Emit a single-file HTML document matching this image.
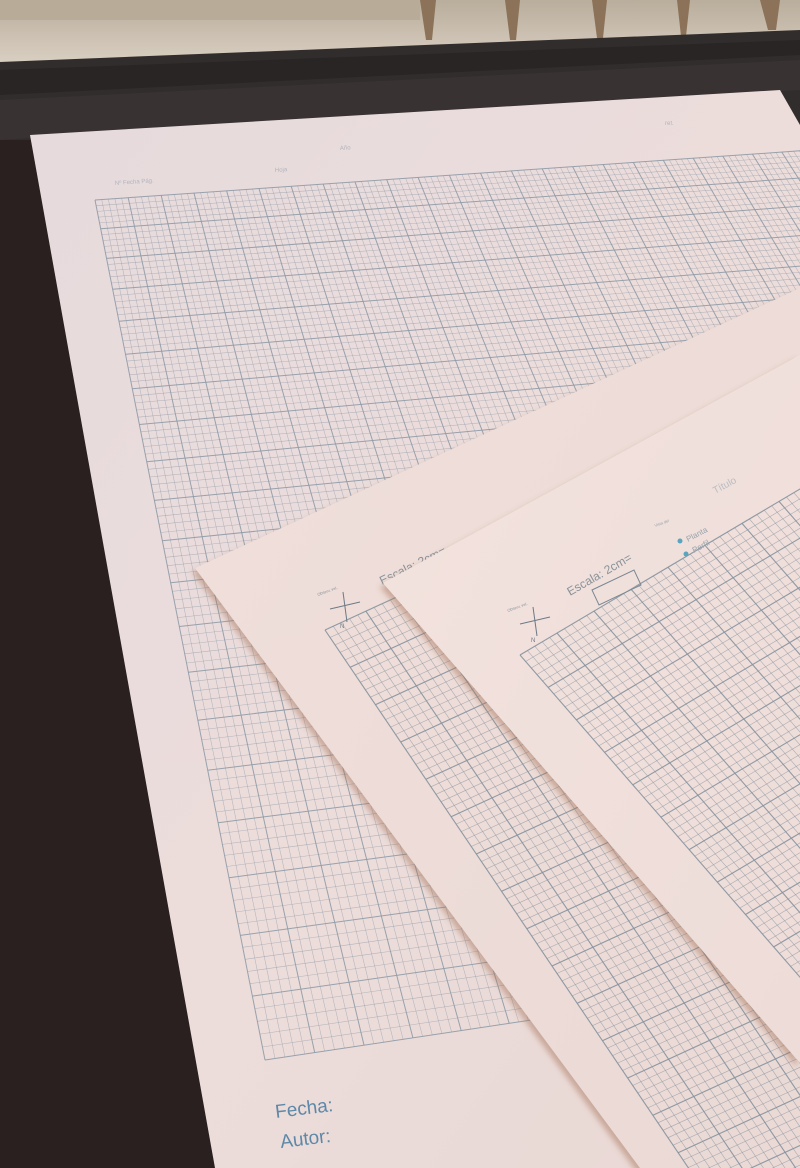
<!DOCTYPE html>
<html><head><meta charset="utf-8">
<style>
html,body{margin:0;padding:0;width:800px;height:1168px;overflow:hidden;background:#2a201f}
svg{display:block;overflow:hidden}
text{font-family:"Liberation Sans","DejaVu Sans",sans-serif}
</style></head>
<body>
<svg id="s" width="800" height="1168" viewBox="0 0 800 1168" xmlns="http://www.w3.org/2000/svg">
<defs>
<linearGradient id="pg" x1="0" y1="0" x2="1" y2="1">
<stop offset="0" stop-color="#e6dadd"/><stop offset="0.5" stop-color="#ecdddb"/><stop offset="1" stop-color="#e9d8d4"/>
</linearGradient>
<linearGradient id="p2" x1="0" y1="0" x2="1" y2="1">
<stop offset="0" stop-color="#f0dfda"/><stop offset="1" stop-color="#ead9d5"/>
</linearGradient>
<linearGradient id="p3" x1="0" y1="0" x2="1" y2="1">
<stop offset="0" stop-color="#f3e3de"/><stop offset="1" stop-color="#eddcd8"/>
</linearGradient>
<linearGradient id="kb" x1="0" y1="0" x2="0" y2="1">
<stop offset="0" stop-color="#b9ad9c"/><stop offset="1" stop-color="#ddd3c6"/>
</linearGradient>
<clipPath id="c0"><rect x="0" y="0" width="800" height="1168"/></clipPath>
<clipPath id="c1"><polygon points="30,135 780,90 800,125 800,1168 215,1168"/></clipPath>
<clipPath id="c2"><polygon points="195,568 800,288 800,1168 640,1168"/></clipPath>
<clipPath id="c3"><polygon points="383,583 800,355 800,1063"/></clipPath>
<filter id="sh" x="-10%" y="-10%" width="130%" height="130%"><feDropShadow dx="-3" dy="4" stdDeviation="3" flood-color="#a06a50" flood-opacity="0.45"/></filter>
</defs>
<g clip-path="url(#c0)">
<rect x="0" y="0" width="800" height="70" fill="url(#kb)"/>
<rect x="0" y="0" width="420" height="20" fill="#b8ab98"/>
<g fill="#8b7258">
<polygon points="420,0 436,0 432,40 426,40"/>
<polygon points="505,0 520,0 516,40 510,40"/>
<polygon points="592,0 607,0 603,38 597,38"/>
<polygon points="677,0 690,0 686,36 681,36"/>
<polygon points="760,0 780,0 776,30 768,30"/>
</g>
<polygon points="0,62 800,30 800,140 0,140" fill="#322d2d"/>
<polygon points="0,70 800,40 800,55 0,95" fill="#2a2525"/>
<polygon points="0,100 800,60 800,90 0,140" fill="#383232"/>
<polygon points="30,135 780,90 800,125 800,1168 215,1168" fill="url(#pg)"/>
<g clip-path="url(#c1)" id="g1" stroke="#8f9aa6" fill="none"></g>
<g fill="#9aa3ad" font-size="6" opacity="0.7">
<text x="115" y="185" transform="rotate(-4 115 185)">Nº  Fecha  Pág.</text>
<text x="275" y="172" transform="rotate(-4 275 172)">Hoja</text>
<text x="340" y="150" transform="rotate(-4 340 150)">Año</text>
<text x="665" y="125">ref.</text>
</g>
<text x="276" y="1118" font-size="19" fill="#5d88a8" transform="rotate(-7 276 1118)">Fecha:</text>
<text x="281" y="1148" font-size="19" fill="#5d88a8" transform="rotate(-7 281 1148)">Autor:</text>
<g filter="url(#sh)"><polygon points="195,568 800,288 800,1168 640,1168" fill="url(#p2)"/></g>
<g clip-path="url(#c2)" id="g2" stroke="#85919d" fill="none"></g>
<text x="382" y="585" font-size="12" fill="#8a929a" transform="rotate(-26 382 585)">Escala: 2cm=</text>
<g stroke="#6d7a86" stroke-width="1" fill="none">
<line x1="343" y1="592" x2="347" y2="622"/><line x1="330" y1="609" x2="360" y2="602"/>
</g>
<text x="340" y="628" font-size="6" fill="#6d7a86">N</text>
<text x="318" y="596" font-size="4" fill="#8a929a" transform="rotate(-20 318 596)">Observ. vel.</text>
<g filter="url(#sh)"><polygon points="383,583 800,355 800,1063" fill="url(#p3)"/></g>
<g clip-path="url(#c3)" id="g3" stroke="#85919d" fill="none"></g>
<text x="570" y="596" font-size="12" fill="#8a929a" transform="rotate(-30 570 596)">Escala: 2cm=</text>
<polygon points="592,590 634,570 641,585 599,605" fill="none" stroke="#7a8793" stroke-width="1"/>
<g stroke="#6d7a86" stroke-width="1" fill="none">
<line x1="533" y1="607" x2="537" y2="636"/><line x1="520" y1="624" x2="550" y2="617"/>
</g>
<text x="531" y="642" font-size="6" fill="#6d7a86">N</text>
<text x="508" y="612" font-size="4" fill="#8a929a" transform="rotate(-20 508 612)">Observ. vel.</text>
<circle cx="680" cy="541" r="2.5" fill="#5aa4c0"/>
<circle cx="686" cy="554" r="2.5" fill="#5aa4c0"/>
<text x="688" y="542" font-size="8" fill="#9aa3ad" transform="rotate(-28 688 542)">Planta</text>
<text x="694" y="553" font-size="8" fill="#9aa3ad" transform="rotate(-28 694 553)">Perfil</text>
<text x="655" y="527" font-size="4" fill="#9aa3ad" transform="rotate(-20 655 527)">Vista del</text>
<text x="715" y="494" font-size="10" fill="#b8bdc2" transform="rotate(-28 715 494)">Título</text>
</g>
</svg>
<script>
function H(p){var x0=p[0],y0=p[1],x1=p[2],y1=p[3],x2=p[4],y2=p[5],x3=p[6],y3=p[7];
var dx1=x1-x2,dx2=x3-x2,dx3=x0-x1+x2-x3,dy1=y1-y2,dy2=y3-y2,dy3=y0-y1+y2-y3;
var den=dx1*dy2-dx2*dy1,g=(dx3*dy2-dx2*dy3)/den,h=(dx1*dy3-dx3*dy1)/den;
var a=x1-x0+g*x1,b=x3-x0+h*x3,c=x0,d=y1-y0+g*y1,e=y3-y0+h*y3,f=y0;
return function(u,v){var w=g*u+h*v+1;return[(a*u+b*v+c)/w,(d*u+e*v+f)/w];};}
function grid(id,p,N,M,minW,majW,minO){var m=H(p),g=document.getElementById(id),s="";
function L(A,B,maj){s+='<line x1="'+A[0].toFixed(1)+'" y1="'+A[1].toFixed(1)+'" x2="'+B[0].toFixed(1)+'" y2="'+B[1].toFixed(1)+'" stroke-width="'+(maj?majW:minW)+'" stroke-opacity="'+(maj?0.9:minO)+'"/>';}
var n=N*5,k=M*5,i;
for(i=0;i<=n;i++){var u=i/n;L(m(u,0),m(u,1),i%5==0);}
for(i=0;i<=k;i++){var v=i/k;L(m(0,v),m(1,v),i%5==0);}
g.innerHTML=s;}
grid("g1",[95,200,840,148,1345,898,265,1060],24,20,0.55,1,0.6);
grid("g2",[325,630,979,329,1433,1001,779,1302],16,18,0.6,1.1,0.65);
grid("g3",[520,655,1112,304,1563,823,971,1174],16,16,0.6,1.1,0.65);
</script>
</body></html>
